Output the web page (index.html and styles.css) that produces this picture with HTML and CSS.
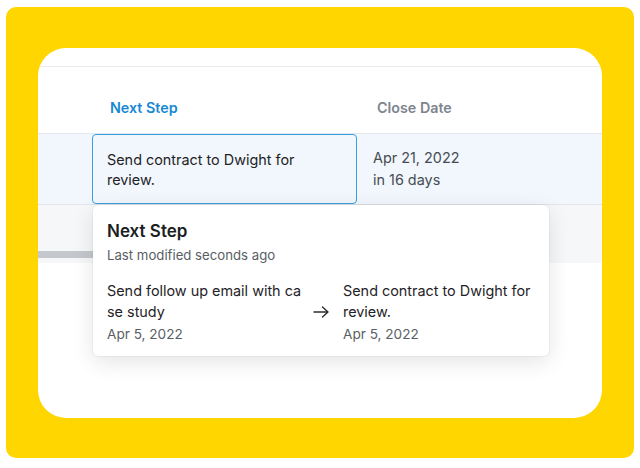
FILE: index.html
```html
<!DOCTYPE html>
<html>
<head>
<meta charset="utf-8">
<link rel="stylesheet" href="styles.css">
</head>
<body>
<div class="frame">
  <div class="card">
    <div class="top-strip"></div>
    <div class="head-row">
      <div class="col-step head-active">Next Step</div>
      <div class="col-date head-muted">Close Date</div>
    </div>
    <div class="data-row">
      <div class="cell-step">
        <div class="cell-text">Send contract to Dwight for review.</div>
      </div>
      <div class="cell-date">
        <div>Apr 21, 2022</div>
        <div>in 16 days</div>
      </div>
    </div>
    <div class="scroll-area">
      <div class="scrollbar"></div>
    </div>
    <div class="popover">
      <div class="pop-title">Next Step</div>
      <div class="pop-sub">Last modified seconds ago</div>
      <div class="change">
        <div class="change-col">
          <div class="change-text break">Send follow up email with case study</div>
          <div class="change-date">Apr 5, 2022</div>
        </div>
        <div class="arrow">
          <svg width="16" height="12" viewBox="0 0 16 12" fill="none" stroke="#2a2d31" stroke-width="1.4" stroke-linecap="round" stroke-linejoin="round"><path d="M1 6h14M9.5 1l5.5 5-5.5 5"/></svg>
        </div>
        <div class="change-col">
          <div class="change-text">Send contract to Dwight for review.</div>
          <div class="change-date">Apr 5, 2022</div>
        </div>
      </div>
    </div>
  </div>
</div>
</body>
</html>
```
FILE: styles.css
```css
* { box-sizing: border-box; }
html, body { margin: 0; padding: 0; background: #ffffff; }
body {
  font-family: Inter, "Noto Sans", "Liberation Sans", sans-serif;
  color: #1f2328;
  width: 640px;
  height: 468px;
  overflow: hidden;
}
.frame {
  margin: 7px 6px 0 6px;
  width: 628px;
  height: 451px;
  background: #ffd600;
  border-radius: 10px;
  padding: 41px 32px 40px 32px;
}
.card {
  position: relative;
  width: 564px;
  height: 370px;
  background: #ffffff;
  border-radius: 28px;
  overflow: hidden;
}
.top-strip {
  height: 19px;
  border-bottom: 1px solid #e9ebee;
}
.head-row {
  display: flex;
  height: 66px;
  align-items: center;
  font-size: 14.3px;
  font-weight: 600;
  padding-top: 14px;
}
.col-step { width: 339px; padding-left: 72px; }
.col-date { flex: 1; }
.head-active { color: #1789d4; }
.head-muted { color: #7d858e; }
.data-row {
  display: flex;
  height: 72px;
  background: #f1f7fc;
  border-top: 1px solid #e4e8ec;
  border-bottom: 1px solid #e1e4e8;
  padding: 0 0 1px 54px;
  font-size: 14.4px;
  line-height: 20px;
}
.cell-step {
  width: 265px;
  height: 70px;
  border: 1px solid #3a9de0;
  border-radius: 4px;
  padding: 0 14px;
  display: flex;
  align-items: center;
  color: #1f2328;
}
.cell-text { width: 210px; padding-top: 1px; }
.cell-date {
  padding-left: 16px;
  display: flex;
  flex-direction: column;
  justify-content: center;
  color: #474c52;
  font-size: 14.4px;
  line-height: 22px;
  padding-top: 1px;
}
.scroll-area {
  height: 58px;
  background: #f6f7f8;
  padding-top: 46px;
}
.scrollbar {
  width: 200px;
  height: 7px;
  background: #c4c8cc;
}
.popover {
  position: absolute;
  left: 55px;
  top: 157px;
  width: 456px;
  height: 151px;
  background: #ffffff;
  border-radius: 6px;
  box-shadow: 0 6px 22px rgba(0,0,0,0.11), 0 0 0 1px rgba(0,0,0,0.035);
  padding: 15px 14px 0 14px;
}
.pop-title {
  font-size: 17px;
  font-weight: 600;
  line-height: 22px;
  color: #1b1e22;
}
.pop-sub {
  margin-top: 3px;
  font-size: 13.2px;
  line-height: 20px;
  color: #595e64;
}
.change {
  margin-top: 15px;
  display: grid;
  grid-template-columns: 197px 39px 1fr;
}
.change-text {
  font-size: 14.4px;
  line-height: 21px;
  color: #1f2328;
}
.break { word-break: break-all; }
.change-date {
  margin-top: 2px;
  font-size: 13.6px;
  line-height: 21px;
  color: #595e64;
}
.arrow {
  display: flex;
  align-items: flex-start;
  justify-content: flex-start;
  padding-left: 9px;
  padding-top: 26px;
}
```
